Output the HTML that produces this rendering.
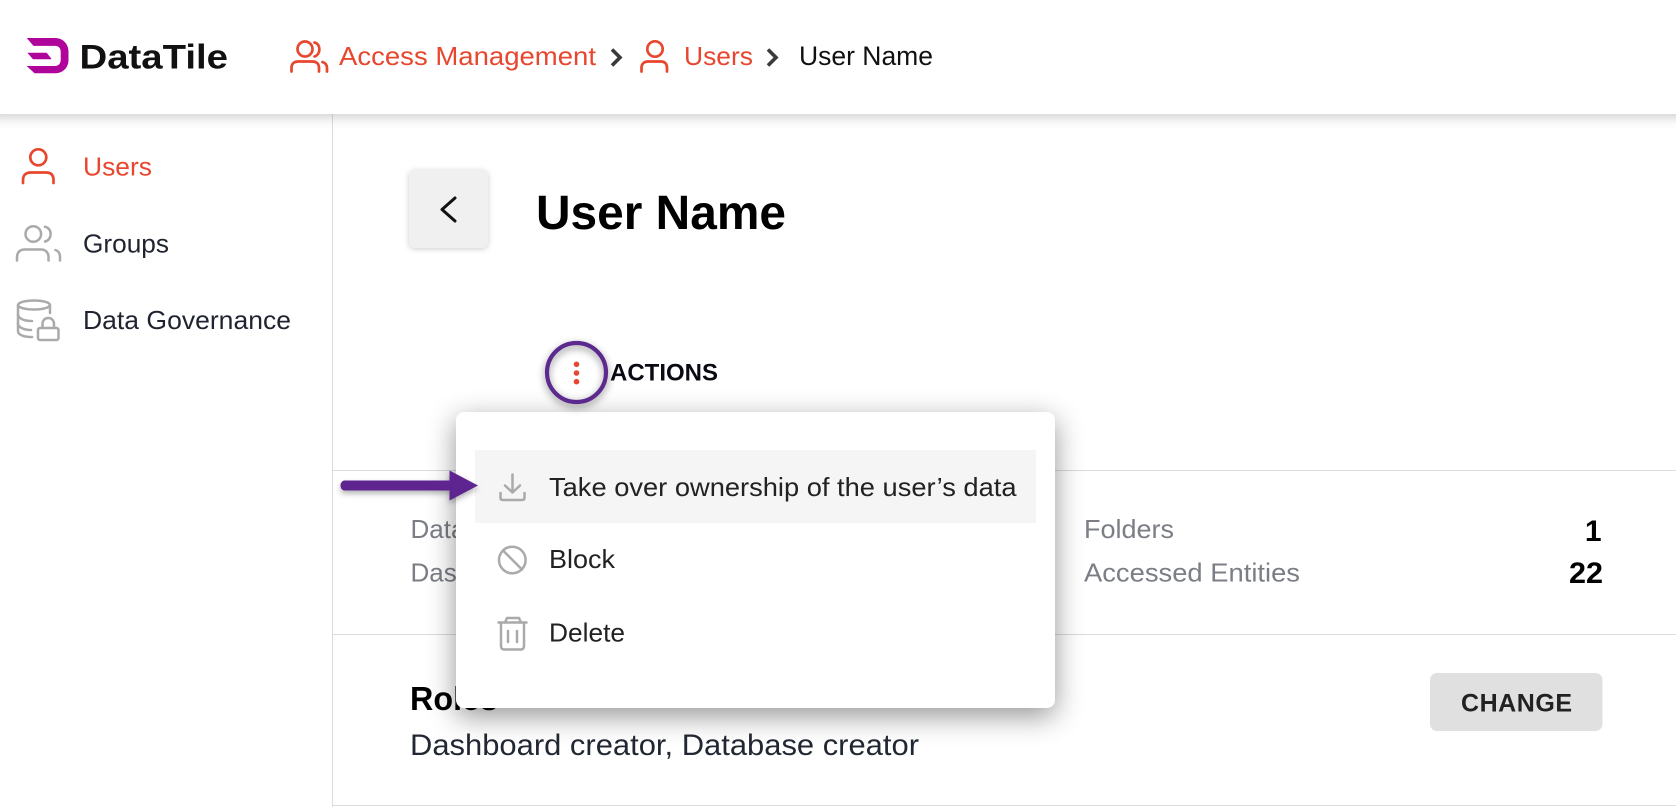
<!DOCTYPE html>
<html><head><meta charset="utf-8"><title>User Name</title>
<style>
html,body{margin:0;padding:0;background:#fff;width:1676px;height:807px;overflow:hidden}
svg{display:block;position:absolute;left:0;top:0}
text{font-family:"Liberation Sans",sans-serif}
.hd{filter:drop-shadow(0 3px 6px rgba(0,0,0,.2))}
.nav{font-size:26px;fill:#1f2430}
.red{fill:#e8472f}
.gr{font-size:26px;fill:#7b7e85}
.mi{font-size:26px;fill:#222}
.ic{fill:none;stroke:#aaa;stroke-width:2.5;stroke-linecap:round;stroke-linejoin:round}
.icr{fill:none;stroke:#e8472f;stroke-width:2.7;stroke-linecap:round;stroke-linejoin:round}
</style></head>
<body>
<svg width="1676" height="807" viewBox="0 0 1676 807" xmlns="http://www.w3.org/2000/svg">
<rect width="1676" height="807" fill="#fff"/>
<g fill="#dcdcdc">
<rect x="332" y="114" width="1" height="693"/>
<rect x="333" y="470" width="1343" height="1"/>
<rect x="333" y="634" width="1343" height="1"/>
<rect x="333" y="805" width="1343" height="1"/>
</g>
<!-- header -->
<rect class="hd" x="-10" y="-10" width="1700" height="124" fill="#fff"/>
<path fill="#b0059b" fill-rule="evenodd" d="M26.700 38H55C63 38 68.500 44 68.500 51.700V60C68.500 67.500 63 73.300 55 73.300H34.500L26.700 66H55C58.500 66 60.700 63.500 60.700 60V51.700C60.700 48 58.500 45.900 55 45.900H33.500ZM27.300 52.700H46.700L51.700 59.300H33Z"/>
<text x="79.500" y="68.500" font-size="34" font-weight="700" fill="#111" textLength="148.500" lengthAdjust="spacingAndGlyphs">DataTile</text>
<g class="icr">
<circle cx="305" cy="49" r="7.500"/>
<path d="M314.500 42.500C321 44 321 54.500 314.500 56.500"/>
<path d="M291.500 71.500V68C291.500 64 294 61.500 298 61.500H312.500C316.500 61.500 319 64 319 68V71.500"/>
<path d="M322.500 62C325.500 63 327 65 327 68V71.500"/>
</g>
<text class="red" x="339" y="65" font-size="26" textLength="257" lengthAdjust="spacingAndGlyphs">Access Management</text>
<path d="M612 49.500L620 57.500L612 65.500" fill="none" stroke="#3a3a3a" stroke-width="3.600"/>
<g class="icr">
<circle cx="655" cy="49" r="7.700"/>
<path d="M641.500 71.500V68C641.500 64 644 61.500 648 61.500H661C665 61.500 667 64 667 68V71.500"/>
</g>
<text class="red" x="684" y="65" font-size="26" textLength="69" lengthAdjust="spacingAndGlyphs">Users</text>
<path d="M768 49.500L776 57.500L768 65.500" fill="none" stroke="#3a3a3a" stroke-width="3.600"/>
<text x="799" y="65" font-size="26.500" fill="#111" textLength="134" lengthAdjust="spacingAndGlyphs">User Name</text>
<!-- sidebar -->
<g class="icr">
<circle cx="38.300" cy="157.300" r="8"/>
<path d="M23 183V180C23 175 26 172.500 31 172.500H46C51 172.500 53.500 175 53.500 180V183"/>
</g>
<text class="nav red" x="83" y="175.500" textLength="69" lengthAdjust="spacingAndGlyphs">Users</text>
<g class="ic">
<circle cx="33.300" cy="234" r="7.800"/>
<path d="M45 226.800C52.500 228 52.500 240 45 241.500"/>
<path d="M17 260.500V257C17 252.500 20 249.500 24.500 249.500H41C45.500 249.500 48.500 252.500 48.500 257V260.500"/>
<path d="M55.500 250C58.500 251 60 253.500 60 257V260.500"/>
</g>
<text class="nav" x="83" y="252.500" textLength="86" lengthAdjust="spacingAndGlyphs">Groups</text>
<g class="ic">
<ellipse cx="34" cy="305" rx="16" ry="4.500"/>
<path d="M18 305V331C18 335 24 337 32 337"/>
<path d="M50 305V313"/>
<path d="M18 315C19 319 25 321 32 321"/>
<path d="M18 324C19 328 25 330 31 330"/>
<rect x="38" y="328" width="20.500" height="12" rx="2"/>
<path d="M42.500 328V324C42.500 316 54 316 54 324V328"/>
</g>
<text class="nav" x="83" y="329" textLength="208" lengthAdjust="spacingAndGlyphs">Data Governance</text>
<!-- back -->
<rect x="409" y="170" width="79" height="78" rx="6" fill="#f0f0f0" style="filter:drop-shadow(0 1px 3px rgba(0,0,0,.2))"/>
<path d="M455 198L442 209.500L455 221" fill="none" stroke="#111" stroke-width="3" stroke-linecap="round" stroke-linejoin="round"/>
<text x="536" y="229" font-size="48" font-weight="700" fill="#000" textLength="250" lengthAdjust="spacingAndGlyphs">User Name</text>
<!-- actions -->
<g fill="#e8472f"><circle cx="576.500" cy="364.300" r="2.800"/><circle cx="576.500" cy="373" r="2.800"/><circle cx="576.500" cy="381.700" r="2.800"/></g>
<text x="610" y="380.700" font-size="24" font-weight="700" fill="#0a0a14" textLength="108" lengthAdjust="spacingAndGlyphs">ACTIONS</text>
<!-- stats -->
<text class="gr" x="410.500" y="538">Databases</text>
<text class="gr" x="410.500" y="581.500">Dashboards</text>
<text class="gr" x="1084" y="538" textLength="90" lengthAdjust="spacingAndGlyphs">Folders</text>
<text class="gr" x="1084" y="581.500" textLength="216" lengthAdjust="spacingAndGlyphs">Accessed Entities</text>
<text x="1601.500" y="541" font-size="30" font-weight="700" fill="#000" text-anchor="end">1</text>
<text x="1569" y="583" font-size="30" font-weight="700" fill="#000" textLength="34" lengthAdjust="spacingAndGlyphs">22</text>
<!-- roles -->
<text x="410" y="710" font-size="33" font-weight="700" fill="#000" textLength="88" lengthAdjust="spacingAndGlyphs">Roles</text>
<text x="410" y="755" font-size="29.500" fill="#222833" textLength="509" lengthAdjust="spacingAndGlyphs">Dashboard creator, Database creator</text>
<rect x="1430" y="673" width="172.500" height="58" rx="7" fill="#e0e0e0"/>
<text x="1461" y="711.500" font-size="25" font-weight="700" fill="#222" textLength="111" lengthAdjust="spacing">CHANGE</text>
<!-- menu -->
<rect x="456" y="412" width="599" height="296" rx="8" fill="#fff" style="filter:drop-shadow(0 8px 14px rgba(0,0,0,.42))"/>
<rect x="475" y="450" width="561" height="73" fill="#f5f5f5"/>
<g class="ic">
<path d="M512.500 474.500V492.500M505 485.500L512.500 492.500L520 485.500"/>
<path d="M500.500 493V498C500.500 499.500 501.500 500 503 500H522C523.500 500 524.500 499.500 524.500 498V493"/>
<circle cx="512.300" cy="560" r="13.300"/>
<path d="M503 550.500L522 569.500"/>
<path d="M498.500 622.500H526.500"/>
<path d="M505 622.500L507 618H519L521 622.500"/>
<path d="M501 622.500V646C501 648.500 502.500 649.500 504.500 649.500H520.500C522.500 649.500 524 648.500 524 646V622.500"/>
<path d="M508 631V642M517 631V642"/>
</g>
<text class="mi" x="549" y="496" textLength="467.500" lengthAdjust="spacingAndGlyphs">Take over ownership of the user’s data</text>
<text class="mi" x="549" y="568" textLength="66" lengthAdjust="spacingAndGlyphs">Block</text>
<text class="mi" x="549" y="641.500" textLength="76" lengthAdjust="spacingAndGlyphs">Delete</text>
<!-- annotations -->
<circle cx="576.500" cy="372.500" r="29.500" fill="none" stroke="#5c2a8e" stroke-width="4.200" style="filter:drop-shadow(0 3px 4px rgba(0,0,0,.45))"/>
<path d="M345 480.500H449.500V470.500L478 485.500L449.500 500.500V490.500H345C339 490.500 339 480.500 345 480.500Z" fill="#5e2590" style="filter:drop-shadow(0 3px 3px rgba(0,0,0,.3))"/>
</svg>
</body></html>
